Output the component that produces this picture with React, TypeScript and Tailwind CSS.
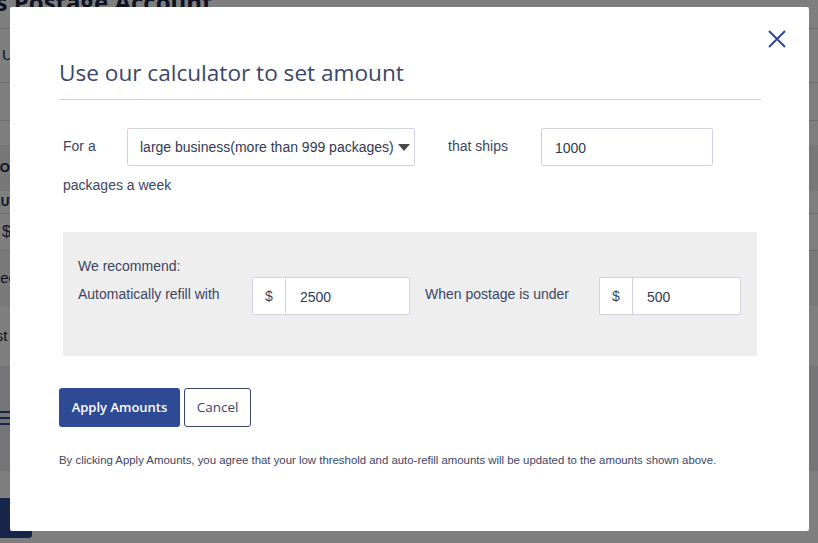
import React, { useState } from 'react';

const body = { fontFamily: '"Liberation Sans", Arial, sans-serif' };
const head = { fontFamily: '"Open Sans", "Noto Sans", sans-serif' };

// the page that sits behind the dialog (mostly hidden by it)
const BackgroundPage: React.FC = () => (
  <div className="h-[543px] w-[818px] overflow-hidden bg-white text-[#1c2746]" style={body}>
    <div className="-ml-[66px] -mt-[14px] text-[24px] font-bold leading-[32px]" style={head}>
      User's Postage Account
    </div>
    <div className="mt-[10px] border-t border-[#dcdcdc]" />
    <div className="flex h-[54px] items-center border-b border-[#dcdcdc] pl-[2px] text-[15px]">USPS</div>
    <div className="h-[38px] border-b border-[#dcdcdc]" />
    <div className="h-[24px]" />
    <div className="flex h-[46px] items-center bg-[#eeeeee] text-[13px] font-bold">
      <span className="-ml-[9px]">POSTAGE</span>
    </div>
    <div className="flex h-[23px] items-center border-b border-[#dcdcdc] text-[12px] font-bold">
      <span className="-ml-[8px]">AUTO</span>
    </div>
    <div className="flex h-[37px] items-center border-b border-[#dcdcdc] pl-[2px] text-[16px]">$</div>
    <div className="flex h-[55px] items-center bg-[#f2f2f2] text-[15px]">
      <span className="-ml-[9px]">Fee</span>
    </div>
    <div className="flex h-[60px] items-center text-[15px]">
      <span className="-ml-[21px]">Last</span>
    </div>
    <div className="flex h-[105px] items-center bg-[#eaebf0]">
      <svg width="30" height="20" viewBox="0 0 30 20" className="text-[#2f4a94]">
        <path d="M0 3h30M0 9h30M0 15h30" stroke="currentColor" strokeWidth="2" />
      </svg>
    </div>
    <div className="h-[27px]" />
    <div className="flex h-[40px] w-[32px] items-center justify-end rounded-r-[3px] bg-[#2f4a94] text-[14px] font-semibold text-white" style={head}>
      nu
    </div>
  </div>
);

const Caret: React.FC = () => (
  <svg width="12" height="7" viewBox="0 0 12 7" className="text-[#4a4a4a]">
    <path d="M0 0h12L6 7z" fill="currentColor" />
  </svg>
);

const CloseIcon: React.FC = () => (
  <svg width="18" height="18" viewBox="0 0 18 18" className="text-[#2f4a94]">
    <path d="M1 1l16 16M17 1L1 17" stroke="currentColor" strokeWidth="2" />
  </svg>
);

const MoneyInput: React.FC<{ value: string; width: string }> = ({ value, width }) => (
  <div className={`flex h-[38px] ${width} overflow-hidden rounded-[2px] border border-[#d3d3e0] bg-white text-[14px]`}>
    <span className="flex w-[33px] shrink-0 items-center justify-center border-r border-[#d3d3e0] text-[#3c4563]">$</span>
    <span className="flex items-center pl-[14px] pt-[2px] text-[#333a52]">{value}</span>
  </div>
);

const App: React.FC = () => {
  const [size] = useState('large business(more than 999 packages)');

  return (
    <div className="relative h-[543px] w-[818px] overflow-hidden">
      <BackgroundPage />

      {/* overlay + dialog */}
      <div className="absolute inset-0 bg-black/50 pl-[10px] pt-[7px]">
        <div className="relative h-[524px] w-[799px] rounded-[2px] bg-white pl-[49px] pr-[48px] text-[#3c4563]" style={body}>
          <button className="absolute right-[23px] top-[23px]" aria-label="Close">
            <CloseIcon />
          </button>

          <h2 className="border-b border-[#cfd0dc] pb-[11px] pt-[51px] text-[22.6px] leading-[30px] text-[#3b4667]" style={head}>
            Use our calculator to set amount
          </h2>

          <div className="mt-[28px] flex flex-wrap items-center px-[4px] text-[14px]">
            <span className="w-[64px] pb-[2px]">For a</span>
            <div className="flex h-[38px] w-[288px] items-center justify-between rounded-[2px] border border-[#d3d3e0] pl-[12px] pr-[4px] text-[#333a52]">
              <span>{size}</span>
              <Caret />
            </div>
            <span className="ml-[33px] w-[93px] pb-[2px]">that ships</span>
            <div className="flex h-[38px] w-[172px] items-center rounded-[2px] border border-[#d3d3e0] pl-[13px] pt-[2px] text-[#333a52]">
              1000
            </div>
            <span className="mt-[10px] w-full leading-[18px]">packages a week</span>
          </div>

          <div className="mx-[4px] mt-[38px] bg-[#eeeeee] pb-[41px] pl-[15px] pt-[25px] text-[14px]">
            <div className="leading-[18px]">We recommend:</div>
            <div className="mt-[2px] flex items-center">
              <span className="w-[174px] pb-[3px]">Automatically refill with</span>
              <MoneyInput value="2500" width="w-[158px]" />
              <span className="ml-[15px] w-[174px] pb-[3px]">When postage is under</span>
              <MoneyInput value="500" width="w-[142px]" />
            </div>
          </div>

          <div className="mt-[32px] flex gap-[4px]" style={head}>
            <button className="h-[39px] w-[121px] rounded-[3px] bg-[#2f4a94] text-[13px] font-semibold text-white">
              Apply Amounts
            </button>
            <button className="h-[39px] w-[67px] rounded-[3px] border border-[#3b4667] bg-white text-[13.5px] text-[#3b4667]">
              Cancel
            </button>
          </div>

          <p className="mt-[26px] text-[11.4px] leading-[14px] text-[#3c4563]">
            By clicking Apply Amounts, you agree that your low threshold and auto-refill amounts will be updated to the amounts shown above.
          </p>
        </div>
      </div>
    </div>
  );
};

export default App;
